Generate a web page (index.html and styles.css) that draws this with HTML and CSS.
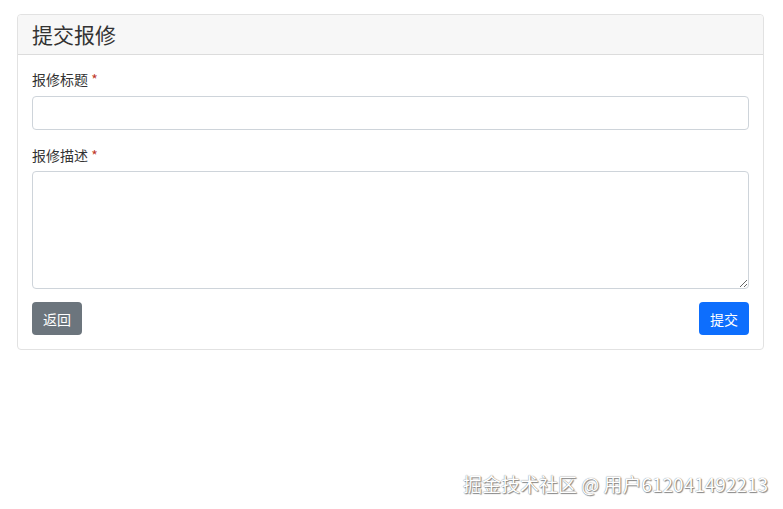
FILE: index.html
```
<!DOCTYPE html>
<html lang="zh">
<head>
<meta charset="utf-8">
<title>提交报修</title>
<link rel="stylesheet" href="styles.css">
</head>
<body>
<div class="page">
  <div class="card">
    <div class="card-header">提交报修</div>
    <div class="card-body">
      <div class="field">
        <label class="label">报修标题 <span class="req">*</span></label>
        <input class="input" type="text">
      </div>
      <div class="field">
        <label class="label">报修描述 <span class="req">*</span></label>
        <textarea class="textarea"></textarea>
      </div>
      <div class="actions">
        <button class="btn btn-secondary">返回</button>
        <button class="btn btn-primary">提交</button>
      </div>
    </div>
  </div>
</div>
<div class="watermark">掘金技术社区 @ 用户612041492213</div>
</body>
</html>
```
FILE: styles.css
```
* { box-sizing: border-box; }
html, body { margin: 0; padding: 0; background: #fff; }
body {
  font-family: "Noto Sans CJK SC", "Noto Sans", sans-serif;
  color: #212529;
  font-size: 14px;
  line-height: 21px;
}
.page { padding: 14px 19px 0 17px; }
.card {
  border: 1px solid #e2e2e2;
  border-radius: 4px;
  background: #fff;
}
.card-header {
  height: 40px;
  padding: 0 14px;
  background: #f7f7f7;
  border-bottom: 1px solid #dcdcdc;
  font-size: 21px;
  line-height: 38px;
  color: #333;
  border-radius: 4px 4px 0 0;
}
.card-body { padding: 14px; }
.field { display: flex; flex-direction: column; }
.field + .field { margin-top: 15px; }
.label { color: #333; margin-bottom: 5px; display: block; }
.req { color: #c0392b; }
.input {
  height: 34px;
  border: 1px solid #ced4da;
  border-radius: 4px;
  background: #fff;
  margin-top: 1px;
}
.textarea {
  height: 118px;
  border: 1px solid #ced4da;
  border-radius: 4px;
  background: #fff;
  resize: vertical;
  margin: 0;
}
.actions {
  display: flex;
  justify-content: space-between;
  margin-top: 13px;
}
.btn {
  height: 33px;
  width: 50px;
  border: none;
  border-radius: 4px;
  color: #fff;
  font-family: inherit;
  font-size: 14px;
  padding: 0;
}
.btn-secondary { background: #6c757d; }
.btn-primary { background: #0d6efd; }
.watermark {
  position: absolute;
  right: 15px;
  top: 471px;
  font-size: 19px;
  line-height: 26px;
  color: #fff;
  text-shadow: 0 0 1px #666, 1px 1px 1px #888;
  letter-spacing: 0;
}
```
